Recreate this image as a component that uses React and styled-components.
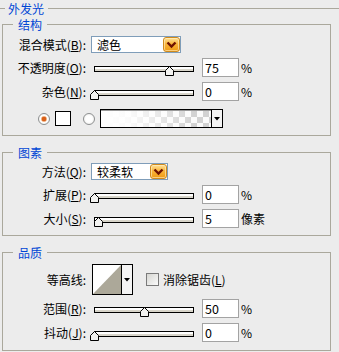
import React from 'react';
import styled, { createGlobalStyle } from 'styled-components';

const Global = createGlobalStyle`
  html, body { margin: 0; padding: 0; background: #ececec; }
  body {
    font-family: "Noto Sans CJK SC", "Liberation Sans", sans-serif;
    font-size: 12px;
    color: #000;
  }
`;

const LINE = '#aaa89c';
const BLUE = '#0046d5';

const Panel = styled.div`
  width: 339px;
  height: 352px;
  background: #ececec;
  overflow: hidden;
`;

const Header = styled.div`
  display: flex;
  align-items: center;
  height: 17px;
  color: ${BLUE};
  &::before { content: ""; width: 5px; height: 1px; background: ${LINE}; }
  &::after { content: ""; flex: 1; height: 1px; background: ${LINE}; }
`;

const HeaderText = styled.span`
  padding: 0 4px 0 3px;
  line-height: 17px;
`;

const Group = styled.div`
  margin: ${(p) => p.$mt}px 0 0 2px;
  width: 329px;
  box-sizing: border-box;
  border: 1px solid ${LINE};
  padding-bottom: ${(p) => p.$pb}px;
`;

const Legend = styled.div`
  display: table;
  margin: -7px 0 0 10px;
  padding: 0 5px;
  height: 14px;
  line-height: 14px;
  background: #ececec;
  color: ${BLUE};
`;

const Row = styled.div`
  display: flex;
  align-items: center;
  height: ${(p) => p.$h || 19}px;
  margin-top: ${(p) => p.$mt}px;
`;

const Label = styled.div`
  flex: none;
  width: 83px;
  text-align: right;
  white-space: nowrap;
  line-height: 14px;
`;

const Select = styled.div`
  flex: none;
  display: flex;
  align-items: center;
  box-sizing: border-box;
  margin-left: 5px;
  width: ${(p) => p.$w}px;
  height: 17px;
  border: 1px solid #7f9db9;
  background: #fff;
  padding-left: 5px;
  line-height: 14px;
`;

const SelectBtn = styled.div`
  margin-left: auto;
  width: 17px;
  height: 15px;
  box-sizing: border-box;
  border: 1px solid #d08a1c;
  border-radius: 3px;
  background: linear-gradient(#ffe29a, #f9b63c 45%, #f09a12);
  box-shadow: inset 0 0 0 1px rgba(255, 240, 200, 0.6);
  display: flex;
  align-items: center;
  justify-content: center;
`;

const SliderWrap = styled.div`
  flex: none;
  position: relative;
  margin-left: 8px;
  width: 100px;
  height: 19px;
`;

const Track = styled.div`
  margin-top: 8px;
  height: 6px;
  box-sizing: border-box;
  border: 1px solid #000;
  background: linear-gradient(#fff 0 60%, #d8d5ca 60%);
`;

const Thumb = styled.svg`
  position: absolute;
  top: 8px;
  width: 9px;
  height: 10px;
  display: block;
`;

const Input = styled.div`
  flex: none;
  margin-left: 8px;
  width: 37px;
  height: 19px;
  box-sizing: border-box;
  border: 1px solid #a3a3a3;
  background: #fff;
  padding-left: 2px;
  line-height: 17px;
  font-size: 12.5px;
`;

const Unit = styled.span`
  margin-left: 2px;
  line-height: 14px;
`;

const Radio = styled.div`
  flex: none;
  margin-left: ${(p) => p.$ml}px;
  width: 12px;
  height: 12px;
  box-sizing: border-box;
  border-radius: 50%;
  border: 1px solid #8d8f90;
  background: ${(p) =>
    p.$on
      ? 'radial-gradient(circle, #d8601a 0 2px, #f0b080 2.5px, #fff 3.5px, #e8e8e4 100%)'
      : 'radial-gradient(circle, #fff 0 3px, #e4e4e0 100%)'};
`;

const Swatch = styled.div`
  flex: none;
  margin-left: 5px;
  width: 16px;
  height: 15px;
  box-sizing: border-box;
  border: 1px solid #000;
  background: #fff;
`;

const GradientPicker = styled.div`
  flex: none;
  margin-left: 5px;
  width: 123px;
  height: 19px;
  box-sizing: border-box;
  border: 1px solid #000;
  display: flex;
`;

const GradientFill = styled.div`
  flex: 1;
  border-top: 1px solid #9a9a9a;
  background:
    linear-gradient(to right, #fff 0%, rgba(255,255,255,0.9) 25%, rgba(255,255,255,0) 85%),
    repeating-conic-gradient(#d2d2d2 0 25%, #fbfbfb 0 50%) 0 0 / 12px 12px;
`;

const ArrowCell = styled.div`
  flex: none;
  width: 10px;
  border-left: 1px solid #000;
  background: #f4f4f4;
  display: flex;
  align-items: center;
  justify-content: center;
`;

const Contour = styled.div`
  flex: none;
  margin-left: 6px;
  width: 41px;
  height: 31px;
  box-sizing: border-box;
  border: 1px solid #000;
  display: flex;
  background: #fff;
`;

const ContourPreview = styled.svg`
  flex: 1;
  display: block;
`;

const Check = styled.div`
  flex: none;
  margin-left: 13px;
  width: 13px;
  height: 13px;
  box-sizing: border-box;
  border: 1px solid #7a7a7a;
  background: linear-gradient(135deg, #d6d6d2, #fbfbfb);
`;

const CheckText = styled.span`
  margin-left: 4px;
  line-height: 14px;
`;

const Chevron = () => (
  <svg width="11" height="8" viewBox="0 0 11 8">
    <polyline points="1.5,1.5 5.5,5.5 9.5,1.5" fill="none" stroke="#6e1200" strokeWidth="2.4" />
  </svg>
);

const DownTri = () => (
  <svg width="6" height="4" viewBox="0 0 6 4">
    <polygon points="0,0 6,0 3,3.5" fill="#000" />
  </svg>
);

const Slider = ({ pct }) => (
  <SliderWrap>
    <Track />
    <Thumb viewBox="0 0 9 10" style={{ left: `calc(${pct}% - 4px)` }}>
      <polygon points="4.5,0.5 8.5,4.5 8.5,9.5 0.5,9.5 0.5,4.5" fill="#f2f2f0" stroke="#000" strokeWidth="1" />
    </Thumb>
  </SliderWrap>
);

const SliderRow = ({ label, pct, value, unit, mt }) => (
  <Row $mt={mt}>
    <Label>{label}</Label>
    <Slider pct={pct} />
    <Input>{value}</Input>
    <Unit>{unit}</Unit>
  </Row>
);

export default function App() {
  return (
    <Panel>
      <Global />
      <Header>
        <HeaderText>外发光</HeaderText>
      </Header>

      <Group $mt={7} $pb={7}>
        <Legend>结构</Legend>
        <Row $h={17} $mt={4}>
          <Label>混合模式(<u>B</u>):</Label>
          <Select $w={90}>
            滤色
            <SelectBtn><Chevron /></SelectBtn>
          </Select>
        </Row>
        <SliderRow mt={5} label={<>不透明度(<u>O</u>):</>} pct={75} value="75" unit="%" />
        <SliderRow mt={5} label={<>杂色(<u>N</u>):</>} pct={0} value="0" unit="%" />
        <Row $mt={8}>
          <Radio $ml={35} $on />
          <Swatch />
          <Radio $ml={12} />
          <GradientPicker>
            <GradientFill />
            <ArrowCell><DownTri /></ArrowCell>
          </GradientPicker>
        </Row>
      </Group>

      <Group $mt={16} $pb={7}>
        <Legend>图素</Legend>
        <Row $h={17} $mt={3}>
          <Label>方法(<u>Q</u>):</Label>
          <Select $w={77}>
            较柔软
            <SelectBtn><Chevron /></SelectBtn>
          </Select>
        </Row>
        <SliderRow mt={5} label={<>扩展(<u>P</u>):</>} pct={0} value="0" unit="%" />
        <SliderRow mt={5} label={<>大小(<u>S</u>):</>} pct={4} value="5" unit="像素" />
      </Group>

      <Group $mt={16} $pb={8}>
        <Legend>品质</Legend>
        <Row $h={31} $mt={4}>
          <Label>等高线:</Label>
          <Contour>
            <ContourPreview viewBox="0 0 29 29" preserveAspectRatio="none">
              <polygon points="0,29 29,0 29,29" fill="#aca899" />
            </ContourPreview>
            <ArrowCell><DownTri /></ArrowCell>
          </Contour>
          <Check />
          <CheckText>消除锯齿(<u>L</u>)</CheckText>
        </Row>
        <SliderRow mt={4} label={<>范围(<u>R</u>):</>} pct={50} value="50" unit="%" />
        <SliderRow mt={5} label={<>抖动(<u>J</u>):</>} pct={0} value="0" unit="%" />
      </Group>
    </Panel>
  );
}
